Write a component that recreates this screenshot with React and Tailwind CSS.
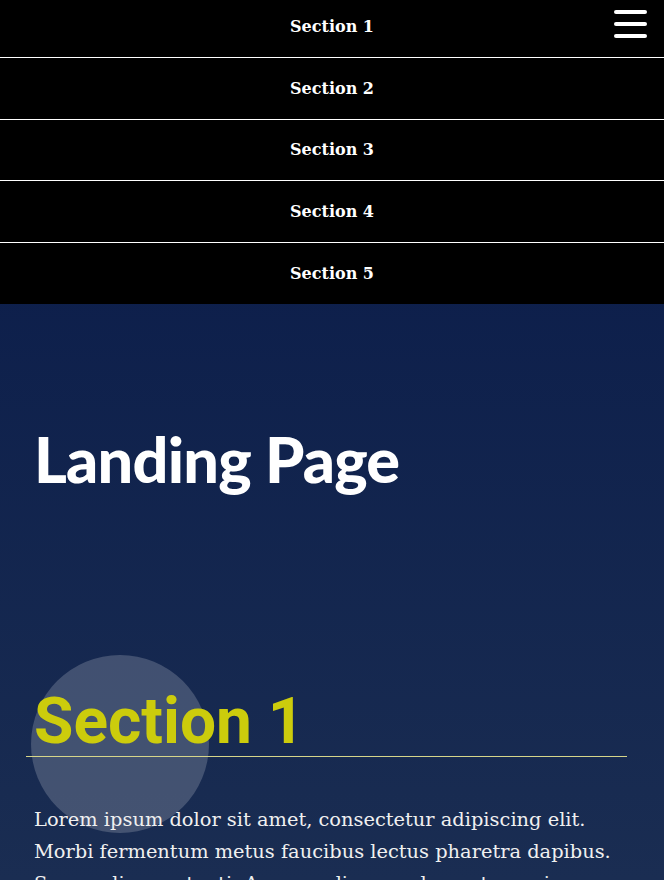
const sections = [
  { name: 'Section 1', h: 'h-[62px]' },
  { name: 'Section 2', h: 'h-[62px]' },
  { name: 'Section 3', h: 'h-[61px]' },
  { name: 'Section 4', h: 'h-[62px]' },
  { name: 'Section 5', h: 'h-[61px] border-b-0' },
];

export default function App() {
  return (
    <div className="relative h-[880px] overflow-hidden bg-gradient-to-b from-[#081848] to-[#1a2d52]">
      {/* Nav menu */}
      <nav className="relative bg-black">
        <ul className="-mt-[4px]">
          {sections.map((s) => (
            <li
              key={s.name}
              className={`${s.h} flex items-center justify-center border-b border-white text-white font-bold text-[16px]`}
              style={{ fontFamily: '"DejaVu Serif", serif' }}
            >
              {s.name}
            </li>
          ))}
        </ul>
        <div className="absolute top-[14px] right-[17px] flex flex-col gap-[8px]">
          <span className="block w-[33px] h-[4px] rounded-full bg-white" />
          <span className="block w-[33px] h-[4px] rounded-full bg-white" />
          <span className="block w-[33px] h-[4px] rounded-full bg-white" />
        </div>
      </nav>

      {/* Header */}
      <header className="pt-[123px] px-[34px]">
        <h1 className="text-white text-[63px] font-black leading-none tracking-[-0.8px]" style={{ fontFamily: 'Lato, sans-serif' }}>
          Landing Page
        </h1>
      </header>

      {/* Section 1 */}
      <section className="relative mt-[200px] px-[26px]">
        <div className="absolute left-[31px] -top-[35px] w-[178px] h-[178px] rounded-full bg-white/[0.19]" />
        <h2
          className="relative pl-[8px] text-[#cccc0c] text-[64px] font-bold leading-none pb-[2px] border-b border-[#d6d68a] mr-[11px]"
          style={{ fontFamily: 'Roboto, "Liberation Sans", sans-serif' }}
        >
          Section 1
        </h2>
        <p
          className="relative mt-[47px] pl-[8px] text-[#f0f0f0] text-[19.4px] leading-[32px]"
          style={{ fontFamily: '"DejaVu Serif", serif' }}
        >
          Lorem ipsum dolor sit amet, consectetur adipiscing elit. Morbi fermentum metus faucibus lectus pharetra dapibus. Suspendisse potenti. Aenean aliquam elementum mi, ac euismod augue.
        </p>
      </section>
    </div>
  );
}
